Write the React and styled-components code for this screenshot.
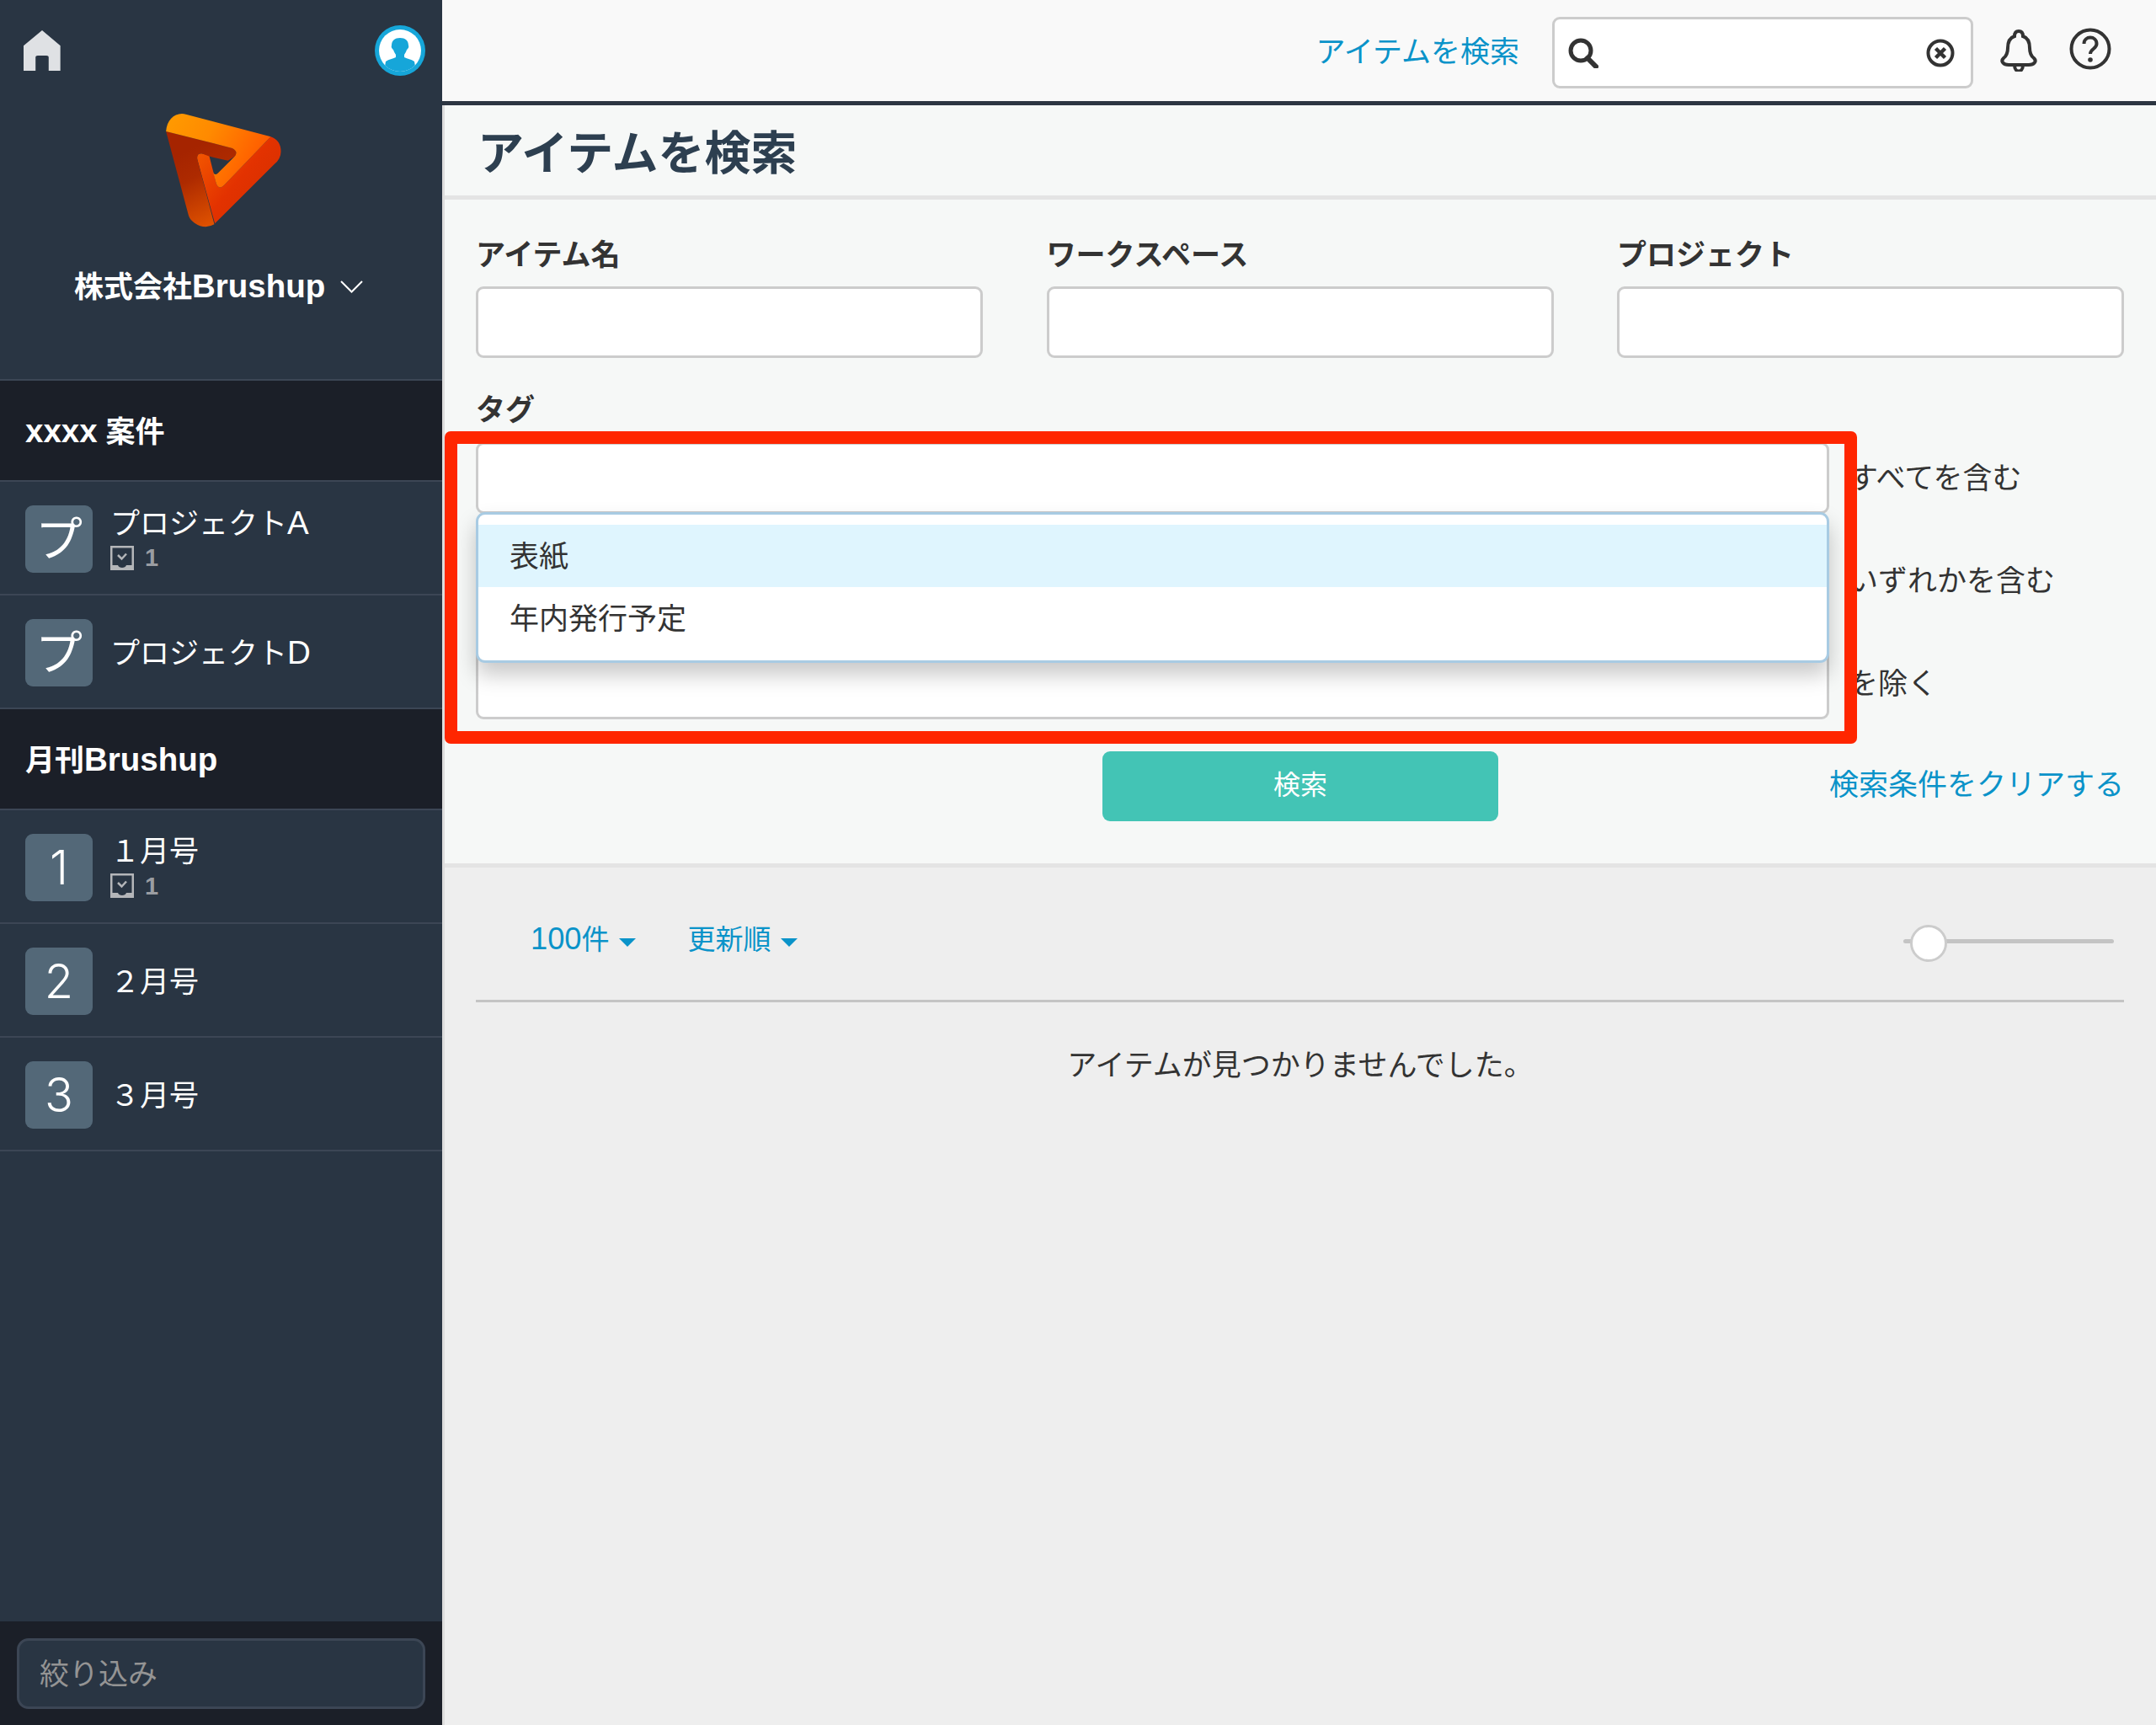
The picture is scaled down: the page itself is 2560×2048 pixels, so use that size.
import styled, { createGlobalStyle } from "styled-components";

const GlobalStyle = createGlobalStyle`
    * {
        box-sizing: border-box;
    }
    body {
        margin: 0;
        background: #eeeeee;
        color: #333333;
        font-family: "Liberation Sans", "Noto Sans CJK JP", sans-serif;
        font-size: 35px;
        line-height: 40px;
    }
`;

const groups = [
    {
        id: "case",
        title: (
            <>
                <Latin>xxxx</Latin> 案件
            </>
        ),
        items: [
            { tile: "プ", name: "プロジェクト", suffix: "A", count: 1 },
            { tile: "プ", name: "プロジェクト", suffix: "D" },
        ],
    },
    {
        id: "monthly",
        title: (
            <>
                月刊<Latin>Brushup</Latin>
            </>
        ),
        items: [
            { tile: "1", digit: true, name: "１月号", count: 1 },
            { tile: "2", digit: true, name: "２月号" },
            { tile: "3", digit: true, name: "３月号" },
        ],
    },
];

const HomeIcon = () => (
    <svg width="44" height="48" viewBox="80 108 130 144" preserveAspectRatio="none">
        <path
            fill="#dfe1e4"
            d="M145 108 L209 163 V252 H168 V205 Q168 198 160 198 H130 Q122 198 122 205 V252 H80 V163 Z"
        />
    </svg>
);

const AvatarIcon = () => (
    <svg width="60" height="60" viewBox="0 0 60 60">
        <circle cx="30" cy="30" r="30" fill="#16a6d9" />
        <circle cx="30" cy="30" r="25" fill="#ffffff" />
        <clipPath id="avatar-clip">
            <circle cx="30" cy="30" r="25" />
        </clipPath>
        <g clipPath="url(#avatar-clip)" fill="#16a6d9">
            <path d="M30 15 C36 15 40 18 40 24 C41 26 39 28 38 29 C37 32 36 33 35 35 V38 C39 40 43 40 47 43 L50 60 H10 L13 43 C17 40 21 40 25 38 V35 C24 33 23 32 22 29 C21 28 19 26 20 24 C20 18 24 15 30 15 Z" />
        </g>
    </svg>
);

const BrandLogo = () => (
    <svg width="145" height="143" viewBox="560 390 420 430" preserveAspectRatio="none">
        <defs>
            <linearGradient id="logo-top" x1="0" y1="0" x2="1" y2="0.4">
                <stop offset="0.1" stopColor="#ff9800" />
                <stop offset="0.45" stopColor="#ff8a00" />
                <stop offset="1" stopColor="#ff5a00" />
            </linearGradient>
            <linearGradient id="logo-left" x1="0.3" y1="0.2" x2="0.6" y2="1">
                <stop offset="0" stopColor="#a52400" />
                <stop offset="0.35" stopColor="#ad2a00" />
                <stop offset="1" stopColor="#e05200" />
            </linearGradient>
            <linearGradient id="logo-right" x1="0.1" y1="0.1" x2="0.8" y2="0.7">
                <stop offset="0" stopColor="#f25500" />
                <stop offset="0.6" stopColor="#e33200" />
                <stop offset="1" stopColor="#d93000" />
            </linearGradient>
        </defs>
        <path
            fill="url(#logo-right)"
            d="M932 487 Q967 500 967 540 Q967 565 945 585 L740 797 L680 570 Q675 545 695 547 L720 553 L745 655 Q755 678 772 660 Z"
        />
        <path
            fill="url(#logo-left)"
            d="M572 468 L800 528 Q822 540 808 558 L785 573 L720 557 L695 547 Q675 545 680 570 L738 800 Q705 820 670 795 Q655 785 650 770 Z"
        />
        <path
            fill="url(#logo-top)"
            d="M572 468 C575 425 605 398 640 407 L932 487 L772 660 Q755 678 745 655 L733 610 Q738 628 750 618 L808 558 Q822 540 800 528 Z"
        />
    </svg>
);

const Chevron = () => (
    <svg width="27" height="15" viewBox="0 0 27 15">
        <path d="M1 1 L13.500 13.500 L26 1" fill="none" stroke="#ffffff" strokeWidth="2" />
    </svg>
);

const TrayCheck = () => (
    <svg width="28" height="29" viewBox="0 0 28 29">
        <path
            fill="#b4b6b9"
            fillRule="evenodd"
            d="M0 0 H28 V29 H0 Z M2.500 2.500 V23 H9 C10 27 18 27 19 23 H25.500 V2.500 Z"
        />
        <path d="M9 11 L13.500 15.500 L19 9.500" fill="none" stroke="#b4b6b9" strokeWidth="2.500" />
    </svg>
);

const SearchIcon = () => (
    <svg width="36" height="36" viewBox="0 0 36 36">
        <circle cx="15" cy="15" r="12" fill="none" stroke="#333333" strokeWidth="5" />
        <path d="M23 24 L33 34" stroke="#333333" strokeWidth="6" strokeLinecap="round" />
    </svg>
);

const ClearIcon = () => (
    <svg width="34" height="34" viewBox="0 0 34 34">
        <circle cx="17" cy="17" r="14.500" fill="none" stroke="#333333" strokeWidth="4" />
        <path d="M11.500 11.500 L22.500 22.500 M22.500 11.500 L11.500 22.500" stroke="#333333" strokeWidth="4.500" />
    </svg>
);

const BellIcon = () => (
    <svg width="44" height="50" viewBox="0 0 44 50">
        <path
            d="M22 2 C26 2 27 5 27 8 C33 10 35 15 35 22 C35 28 36 31 40 34 C44 38 40 42 34 42 H10 C4 42 0 38 4 34 C8 31 9 28 9 22 C9 15 11 10 17 8 C17 5 18 2 22 2 Z M17 42 C17 52 27 52 27 42"
            fill="none"
            stroke="#333333"
            strokeWidth="4"
        />
    </svg>
);

const HelpIcon = () => (
    <svg width="50" height="50" viewBox="0 0 50 50">
        <circle cx="25" cy="25" r="22.500" fill="none" stroke="#333333" strokeWidth="4" />
        <path
            d="M17.500 19 C17.500 9 32.500 9 32.500 19 C32.500 25 25 25 25 31"
            fill="none"
            stroke="#333333"
            strokeWidth="4"
        />
        <circle cx="25" cy="38" r="2.800" fill="#333333" />
    </svg>
);

function SidebarRow({ item }) {
    return (
        <Row>
            <Tile $digit={item.digit}>{item.tile}</Tile>
            <RowText>
                <RowName>
                    {item.name}
                    {item.suffix && <Latin>{item.suffix}</Latin>}
                </RowName>
                {item.count && (
                    <RowCount>
                        <TrayCheck />
                        <span>{item.count}</span>
                    </RowCount>
                )}
            </RowText>
        </Row>
    );
}

export default function App() {
    return (
        <Page>
            <GlobalStyle />
            <Sidebar>
                <SideTop>
                    <TopIcons>
                        <HomeIcon />
                        <AvatarIcon />
                    </TopIcons>
                    <LogoWrap>
                        <BrandLogo />
                    </LogoWrap>
                    <Company>
                        <span>
                            株式会社<Latin>Brushup</Latin>
                        </span>
                        <Chevron />
                    </Company>
                </SideTop>
                {groups.map((group) => (
                    <div key={group.id}>
                        <GroupHeader>
                            <span>{group.title}</span>
                        </GroupHeader>
                        {group.items.map((item) => (
                            <SidebarRow key={item.tile + item.name + item.suffix} item={item} />
                        ))}
                    </div>
                ))}
                <SideFooter>
                    <FilterInput placeholder="絞り込み" />
                </SideFooter>
            </Sidebar>

            <Main>
                <TopBar>
                    <Link>アイテムを検索</Link>
                    <SearchBox>
                        <SearchIcon />
                        <ClearIcon />
                    </SearchBox>
                    <TopIcon $up={5} $gap={4}>
                        <BellIcon />
                    </TopIcon>
                    <TopIcon $up={10}>
                        <HelpIcon />
                    </TopIcon>
                </TopBar>
                <Body>
                    <HeadingBar>
                        <Title>アイテムを検索</Title>
                    </HeadingBar>
                    <Form>
                        <FieldGrid>
                            <div>
                                <FieldLabel>アイテム名</FieldLabel>
                                <TextBox />
                            </div>
                            <div>
                                <FieldLabel>ワークスペース</FieldLabel>
                                <TextBox />
                            </div>
                            <div>
                                <FieldLabel>プロジェクト</FieldLabel>
                                <TextBox />
                            </div>
                        </FieldGrid>
                        <TagLabel>タグ</TagLabel>
                        <TagArea>
                            <TagRow>
                                <TagField>
                                    <TextBox />
                                    <Dropdown>
                                        <Option $active>表紙</Option>
                                        <Option>年内発行予定</Option>
                                    </Dropdown>
                                </TagField>
                                <span>すべてを含む</span>
                            </TagRow>
                            <TagRow>
                                <TagField>
                                    <TextBox />
                                </TagField>
                                <span>いずれかを含む</span>
                            </TagRow>
                            <TagRow>
                                <TagField>
                                    <TextBox />
                                </TagField>
                                <span>を除く</span>
                            </TagRow>
                            <RedFrame />
                        </TagArea>
                        <ActionGrid>
                            <span />
                            <SubmitButton>検索</SubmitButton>
                            <ClearLink>検索条件をクリアする</ClearLink>
                        </ActionGrid>
                    </Form>
                    <Results>
                        <Toolbar>
                            <SortLink>
                                <span>
                                    <Latin>100</Latin>件
                                </span>
                                <Caret />
                            </SortLink>
                            <SortLink>
                                更新順
                                <Caret />
                            </SortLink>
                            <Slider>
                                <Thumb />
                            </Slider>
                        </Toolbar>
                        <Empty>アイテムが見つかりませんでした。</Empty>
                    </Results>
                </Body>
            </Main>
        </Page>
    );
}

function Latin({ children }) {
    return <LatinText>{children}</LatinText>;
}

const LatinText = styled.span`
    font-size: 1.1em;
`;

const Page = styled.div`
    display: grid;
    grid-template-columns: 525px 1fr;
    width: 2560px;
    height: 2048px;
    overflow: hidden;
`;

const Sidebar = styled.aside`
    display: flex;
    flex-direction: column;
    height: 2048px;
    background: #293543;
    color: #ffffff;
`;

const SideTop = styled.div`
    height: 452px;
    border-bottom: 2px solid #3c4655;
`;

const TopIcons = styled.div`
    display: flex;
    justify-content: space-between;
    align-items: center;
    padding: 30px 20px 0 28px;
`;

const LogoWrap = styled.div`
    display: flex;
    padding: 40px 0 0 193px;
    svg {
        display: block;
    }
`;

const Company = styled.div`
    display: flex;
    align-items: center;
    gap: 18px;
    margin-top: 47px;
    padding-left: 88px;
    font-weight: 700;
`;

const GroupHeader = styled.div`
    display: flex;
    align-items: center;
    height: 120px;
    padding: 2px 0 0 30px;
    background: #1b1f28;
    border-bottom: 2px solid #3c4655;
    font-weight: 700;
`;

const Row = styled.div`
    display: flex;
    align-items: center;
    gap: 21px;
    height: 135px;
    padding: 2px 0 0 30px;
    border-bottom: 2px solid #3c4655;
`;

const Tile = styled.div`
    display: flex;
    align-items: center;
    justify-content: center;
    width: 80px;
    height: 80px;
    border-radius: 9px;
    background: #536878;
    font-family: Inter, "Noto Sans CJK JP", sans-serif;
    font-size: 56px;
    font-weight: ${(props) => (props.$digit ? 300 : 400)};
`;

const RowText = styled.div`
    display: flex;
    flex-direction: column;
    gap: 6px;
    padding-top: 2px;
`;

const RowName = styled.div`
    line-height: 40px;
`;

const RowCount = styled.div`
    display: flex;
    align-items: center;
    gap: 13px;
    height: 29px;
    margin-bottom: 4px;
    color: #9a9da2;
    font-size: 29px;
    font-weight: 700;
`;

const SideFooter = styled.div`
    display: flex;
    align-items: center;
    margin-top: auto;
    height: 123px;
    padding: 0 20px;
    background: #1b1f28;
`;

const FilterInput = styled.input`
    width: 485px;
    height: 84px;
    padding: 2px 24px 0;
    border: 3px solid #3c4655;
    border-radius: 14px;
    background: #293543;
    color: #ffffff;
    font: inherit;
    outline: none;
    &::placeholder {
        color: #949494;
    }
`;

const Main = styled.main`
    display: flex;
    flex-direction: column;
    height: 2048px;
`;

const TopBar = styled.header`
    display: flex;
    align-items: center;
    justify-content: flex-end;
    gap: 34px;
    height: 125px;
    padding: 5px 53px 0 0;
    border-bottom: 5px solid #2d3642;
    background: #f9f9f9;
`;

const Link = styled.a`
    margin: 0 5px 2px 0;
    color: #0a93c9;
`;

const SearchBox = styled.div`
    display: flex;
    align-items: center;
    justify-content: space-between;
    width: 500px;
    height: 85px;
    margin-right: -2px;
    padding: 0 19px 0 16px;
    border: 3px solid #cccccc;
    border-radius: 9px;
    background: #ffffff;
`;

const TopIcon = styled.div`
    display: flex;
    margin-bottom: ${(props) => props.$up}px;
    margin-right: ${(props) => props.$gap || 0}px;
`;

const Body = styled.div`
    display: flex;
    flex: 1;
    flex-direction: column;
    border-left: 3px solid #dddddd;
`;

const HeadingBar = styled.div`
    display: flex;
    align-items: center;
    height: 112px;
    padding: 7px 0 0 39px;
    border-bottom: 5px solid #e4e4e4;
    background: #f6f8f7;
`;

const Title = styled.h1`
    margin: 0;
    color: #2d3f50;
    font-size: 55px;
    font-weight: 700;
    line-height: 60px;
`;

const Form = styled.section`
    height: 793px;
    padding: 46px 38px 0 37px;
    border-bottom: 5px solid #e4e4e4;
    background: #f6f8f7;
`;

const FieldGrid = styled.div`
    display: grid;
    grid-template-columns: repeat(3, 602px);
    justify-content: space-between;
`;

const FieldLabel = styled.label`
    display: block;
    margin-bottom: 17px;
    font-weight: 700;
`;

const TagLabel = styled(FieldLabel)`
    margin: 42px 0 18px;
`;

const TextBox = styled.input`
    display: block;
    width: 100%;
    height: 85px;
    border: 3px solid #cccccc;
    border-radius: 9px;
    background: #ffffff;
    outline: none;
`;

const TagArea = styled.div`
    position: relative;
    display: flex;
    flex-direction: column;
    gap: 37px;
`;

const TagRow = styled.div`
    display: flex;
    align-items: center;
    gap: 23px;
`;

const TagField = styled.div`
    position: relative;
    width: 1607px;
`;

const Dropdown = styled.div`
    position: absolute;
    top: 83px;
    left: 0;
    z-index: 2;
    width: 100%;
    height: 179px;
    padding-top: 12px;
    border: 3px solid #a8cbe3;
    border-radius: 11px;
    background: #ffffff;
    box-shadow: 0 14px 26px rgba(0, 0, 0, 0.22);
`;

const Option = styled.div`
    display: flex;
    align-items: center;
    height: 74px;
    padding: 2px 0 0 37px;
    background: ${(props) => (props.$active ? "#dff5fe" : "transparent")};
`;

const RedFrame = styled.div`
    position: absolute;
    top: -13px;
    left: -37px;
    z-index: 3;
    width: 1677px;
    height: 371px;
    border: 15px solid #ff2600;
    border-radius: 7px;
    pointer-events: none;
`;

const ActionGrid = styled(FieldGrid)`
    align-items: center;
    margin-top: 38px;
`;

const SubmitButton = styled.button`
    justify-self: center;
    width: 470px;
    height: 83px;
    margin-left: 1px;
    padding: 0 0 10px;
    border: 0;
    border-radius: 9px;
    background: #43c4b5;
    color: #ffffff;
    font-family: inherit;
    font-size: 32px;
`;

const ClearLink = styled.a`
    justify-self: end;
    margin-bottom: 3px;
    color: #0a93c9;
    white-space: nowrap;
`;

const Results = styled.div`
    flex: 1;
    background: #eeeeee;
`;

const Toolbar = styled.div`
    display: flex;
    align-items: center;
    gap: 62px;
    height: 160px;
    margin: 0 38px 0 37px;
    padding: 14px 12px 0 65px;
    border-bottom: 3px solid #c4c4c4;
`;

const SortLink = styled.a`
    display: flex;
    align-items: center;
    gap: 11px;
    color: #0a93c9;
    font-size: 33px;
`;

const Caret = styled.i`
    width: 0;
    height: 0;
    margin-top: 6px;
    border-top: 10px solid #0a93c9;
    border-left: 10px solid transparent;
    border-right: 10px solid transparent;
`;

const Slider = styled.div`
    position: relative;
    width: 250px;
    height: 5px;
    margin: 4px 0 0 auto;
    border-radius: 3px;
    background: #c4c4c4;
`;

const Thumb = styled.div`
    position: absolute;
    top: -17px;
    left: 8px;
    width: 44px;
    height: 44px;
    border: 3px solid #cccccc;
    border-radius: 50%;
    background: #ffffff;
`;

const Empty = styled.p`
    margin: 55px 0 0;
    text-align: center;
`;
